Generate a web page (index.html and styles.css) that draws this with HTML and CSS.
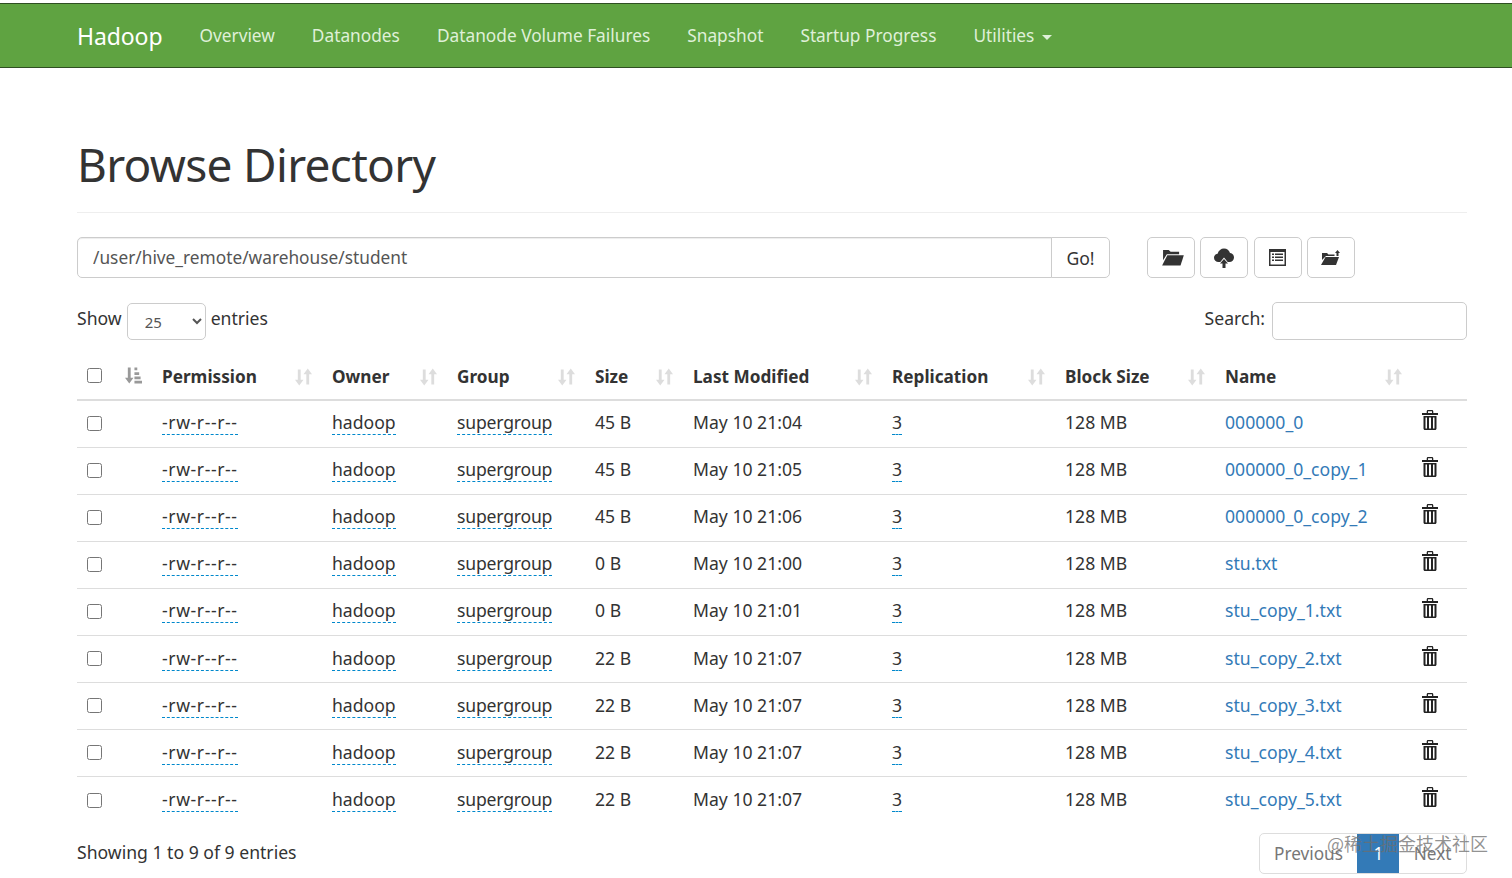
FILE: index.html
```html
<!DOCTYPE html>
<html lang="en">
<head>
    <meta charset="UTF-8">
    <title>Browsing HDFS</title>
    <link rel="stylesheet" href="styles.css">
</head>
<body>
    <svg class="icon-defs" xmlns="http://www.w3.org/2000/svg">
        <symbol id="i-sort" viewBox="0 0 18 18">
            <path d="M3 1h3v11h3l-4.500 6L0 12h3z"/>
            <path d="M12 17h3V6h3L13.500 0 9 6h3z"/>
        </symbol>
        <symbol id="i-sort-asc" viewBox="0 0 18 18">
            <path d="M3 1h3v11h3l-4.500 6L0 12h3z"/>
            <path d="M10 1h3v3h-3zM10 6h5v3h-5zM10 10.500h6.500v3H10zM10 15h8v3h-8z"/>
        </symbol>
        <symbol id="i-folder" viewBox="0 0 24 18">
            <path d="M2 1h6l2 2h9v2.500H6L2 12z"/>
            <path d="M6.500 6.500H24l-3.500 11H1z"/>
        </symbol>
        <symbol id="i-cloud" viewBox="0 0 20 20">
            <path d="M4.500 14C2 14 0 12.300 0 9.800c0-2.200 1.500-3.800 3.600-4C4.500 2.500 7 .5 10 .5c3 0 5.300 1.800 6 4.500 2.300.2 4 2 4 4.400 0 2.600-2 4.600-4.600 4.600h-1.700L10 9.500 6.300 14z"/>
            <path d="M10 11l4 4.500h-2.500V20h-3v-4.500H6z"/>
        </symbol>
        <symbol id="i-list" viewBox="0 0 17 17">
            <path fill-rule="evenodd" d="M0 0h17v17H0zM1.500 3v12.500h14V3z"/>
            <path d="M3 4.500h2V6H3zM6 4.500h8V6H6zM3 7.500h2V9H3zM6 7.500h8V9H6zM3 10.500h2V12H3zM6 10.500h8V12H6z"/>
        </symbol>
        <symbol id="i-folder-up" viewBox="0 0 19 15">
            <path d="M1 3h5l1.500 1.500h6v1.500H5L1 10z"/>
            <path d="M4.500 7H18l-3 8H0z"/>
            <path d="M16.500 0L19 3h-1.500v3h-2V3H14z"/>
        </symbol>
        <symbol id="i-trash" viewBox="0 0 16 20">
            <path d="M6 0h4c.8 0 1.300.6 1.300 1.500V3H16v2H0V3h4.700V1.500C4.700.6 5.200 0 6 0zm0 1.300V3h4V1.300z" fill-rule="evenodd"/>
            <path fill-rule="evenodd" d="M1.500 6h13v12.500c0 .9-.6 1.500-1.500 1.500H3c-.9 0-1.500-.6-1.500-1.500zM3.500 7.500v11h1.500v-11zM7 7.500v11h2v-11zM11 7.500v11h1.500v-11z"/>
        </symbol>
    </svg>

    <nav class="navbar">
        <a class="brand" href="#">Hadoop</a>
        <ul class="nav-links">
            <li><a href="#">Overview</a></li>
            <li><a href="#">Datanodes</a></li>
            <li><a href="#">Datanode Volume Failures</a></li>
            <li><a href="#">Snapshot</a></li>
            <li><a href="#">Startup Progress</a></li>
            <li><a href="#">Utilities <span class="caret"></span></a></li>
        </ul>
    </nav>

    <div class="container">
        <div class="page-header">
            <h1>Browse Directory</h1>
        </div>

        <div class="path-row">
            <div class="input-group">
                <input class="path-input" type="text" value="/user/hive_remote/warehouse/student">
                <button class="go-button" type="button">Go!</button>
            </div>
            <div class="toolbar">
                <button class="tool-button" type="button"><svg class="icon-folder"><use href="#i-folder"/></svg></button>
                <button class="tool-button" type="button"><svg class="icon-cloud"><use href="#i-cloud"/></svg></button>
                <button class="tool-button" type="button"><svg class="icon-list"><use href="#i-list"/></svg></button>
                <button class="tool-button" type="button"><svg class="icon-folder-up"><use href="#i-folder-up"/></svg></button>
            </div>
        </div>

        <div class="table-controls">
            <label class="length-label">Show
                <select class="length-select"><option>25</option></select>
                entries</label>
            <label class="search-label">Search:
                <input class="search-input" type="search">
            </label>
        </div>

        <table class="file-table">
            <colgroup>
                <col class="col-check">
                <col class="col-order">
                <col class="col-permission">
                <col class="col-owner">
                <col class="col-group">
                <col class="col-size">
                <col class="col-modified">
                <col class="col-replication">
                <col class="col-block">
                <col class="col-name">
                <col class="col-delete">
            </colgroup>
            <thead>
                <tr>
                    <th><input class="row-check" type="checkbox"></th>
                    <th><svg class="sort-icon sort-active"><use href="#i-sort-asc"/></svg></th>
                    <th><div class="th-inner">Permission <svg class="sort-icon"><use href="#i-sort"/></svg></div></th>
                    <th><div class="th-inner">Owner <svg class="sort-icon"><use href="#i-sort"/></svg></div></th>
                    <th><div class="th-inner">Group <svg class="sort-icon"><use href="#i-sort"/></svg></div></th>
                    <th><div class="th-inner">Size <svg class="sort-icon"><use href="#i-sort"/></svg></div></th>
                    <th><div class="th-inner">Last Modified <svg class="sort-icon"><use href="#i-sort"/></svg></div></th>
                    <th><div class="th-inner">Replication <svg class="sort-icon"><use href="#i-sort"/></svg></div></th>
                    <th><div class="th-inner">Block Size <svg class="sort-icon"><use href="#i-sort"/></svg></div></th>
                    <th><div class="th-inner">Name <svg class="sort-icon"><use href="#i-sort"/></svg></div></th>
                    <th></th>
                </tr>
            </thead>
            <tbody>
                <tr>
                    <td><input class="row-check" type="checkbox"></td><td></td>
                    <td><span class="editable perm">-rw-r--r--</span></td>
                    <td><span class="editable">hadoop</span></td>
                    <td><span class="editable group">supergroup</span></td>
                    <td>45 B</td>
                    <td>May 10 21:04</td>
                    <td><span class="editable">3</span></td>
                    <td>128 MB</td>
                    <td><a class="file-link" href="#">000000_0</a></td>
                    <td><svg class="icon-trash"><use href="#i-trash"/></svg></td>
                </tr>
                <tr>
                    <td><input class="row-check" type="checkbox"></td><td></td>
                    <td><span class="editable perm">-rw-r--r--</span></td>
                    <td><span class="editable">hadoop</span></td>
                    <td><span class="editable group">supergroup</span></td>
                    <td>45 B</td>
                    <td>May 10 21:05</td>
                    <td><span class="editable">3</span></td>
                    <td>128 MB</td>
                    <td><a class="file-link" href="#">000000_0_copy_1</a></td>
                    <td><svg class="icon-trash"><use href="#i-trash"/></svg></td>
                </tr>
                <tr>
                    <td><input class="row-check" type="checkbox"></td><td></td>
                    <td><span class="editable perm">-rw-r--r--</span></td>
                    <td><span class="editable">hadoop</span></td>
                    <td><span class="editable group">supergroup</span></td>
                    <td>45 B</td>
                    <td>May 10 21:06</td>
                    <td><span class="editable">3</span></td>
                    <td>128 MB</td>
                    <td><a class="file-link" href="#">000000_0_copy_2</a></td>
                    <td><svg class="icon-trash"><use href="#i-trash"/></svg></td>
                </tr>
                <tr>
                    <td><input class="row-check" type="checkbox"></td><td></td>
                    <td><span class="editable perm">-rw-r--r--</span></td>
                    <td><span class="editable">hadoop</span></td>
                    <td><span class="editable group">supergroup</span></td>
                    <td>0 B</td>
                    <td>May 10 21:00</td>
                    <td><span class="editable">3</span></td>
                    <td>128 MB</td>
                    <td><a class="file-link" href="#">stu.txt</a></td>
                    <td><svg class="icon-trash"><use href="#i-trash"/></svg></td>
                </tr>
                <tr>
                    <td><input class="row-check" type="checkbox"></td><td></td>
                    <td><span class="editable perm">-rw-r--r--</span></td>
                    <td><span class="editable">hadoop</span></td>
                    <td><span class="editable group">supergroup</span></td>
                    <td>0 B</td>
                    <td>May 10 21:01</td>
                    <td><span class="editable">3</span></td>
                    <td>128 MB</td>
                    <td><a class="file-link" href="#">stu_copy_1.txt</a></td>
                    <td><svg class="icon-trash"><use href="#i-trash"/></svg></td>
                </tr>
                <tr>
                    <td><input class="row-check" type="checkbox"></td><td></td>
                    <td><span class="editable perm">-rw-r--r--</span></td>
                    <td><span class="editable">hadoop</span></td>
                    <td><span class="editable group">supergroup</span></td>
                    <td>22 B</td>
                    <td>May 10 21:07</td>
                    <td><span class="editable">3</span></td>
                    <td>128 MB</td>
                    <td><a class="file-link" href="#">stu_copy_2.txt</a></td>
                    <td><svg class="icon-trash"><use href="#i-trash"/></svg></td>
                </tr>
                <tr>
                    <td><input class="row-check" type="checkbox"></td><td></td>
                    <td><span class="editable perm">-rw-r--r--</span></td>
                    <td><span class="editable">hadoop</span></td>
                    <td><span class="editable group">supergroup</span></td>
                    <td>22 B</td>
                    <td>May 10 21:07</td>
                    <td><span class="editable">3</span></td>
                    <td>128 MB</td>
                    <td><a class="file-link" href="#">stu_copy_3.txt</a></td>
                    <td><svg class="icon-trash"><use href="#i-trash"/></svg></td>
                </tr>
                <tr>
                    <td><input class="row-check" type="checkbox"></td><td></td>
                    <td><span class="editable perm">-rw-r--r--</span></td>
                    <td><span class="editable">hadoop</span></td>
                    <td><span class="editable group">supergroup</span></td>
                    <td>22 B</td>
                    <td>May 10 21:07</td>
                    <td><span class="editable">3</span></td>
                    <td>128 MB</td>
                    <td><a class="file-link" href="#">stu_copy_4.txt</a></td>
                    <td><svg class="icon-trash"><use href="#i-trash"/></svg></td>
                </tr>
                <tr>
                    <td><input class="row-check" type="checkbox"></td><td></td>
                    <td><span class="editable perm">-rw-r--r--</span></td>
                    <td><span class="editable">hadoop</span></td>
                    <td><span class="editable group">supergroup</span></td>
                    <td>22 B</td>
                    <td>May 10 21:07</td>
                    <td><span class="editable">3</span></td>
                    <td>128 MB</td>
                    <td><a class="file-link" href="#">stu_copy_5.txt</a></td>
                    <td><svg class="icon-trash"><use href="#i-trash"/></svg></td>
                </tr>
            </tbody>
        </table>

        <div class="table-footer">
            <div class="table-info">Showing 1 to 9 of 9 entries</div>
            <ul class="pagination">
                <li><a class="page-link" href="#">Previous</a></li>
                <li><a class="page-link page-current" href="#">1</a></li>
                <li><a class="page-link" href="#">Next</a></li>
            </ul>
        </div>
    </div>

    <div class="watermark">@稀土掘金技术社区</div>
</body>
</html>
```

FILE: styles.css
```css
* {
    box-sizing: border-box;
}

html, body {
    height: 878px;
    overflow: hidden;
}

body {
    margin: 0;
    padding-top: 3px;
    background-color: #ffffff;
    color: #333333;
    font-family: "Noto Sans", "Open Sans", sans-serif;
    font-size: 17.600px;
}

a {
    text-decoration: none;
}

ul {
    list-style: none;
    margin: 0;
    padding: 0;
}

.icon-defs {
    display: none;
}

/* navbar */
.navbar {
    display: flex;
    align-items: center;
    height: 65px;
    padding-left: 77px;
    background-color: #5fa341;
    border-top: 1px solid #2f4f22;
    border-bottom: 1px solid #2f4f22;
}

.brand {
    color: #ffffff;
    font-size: 23px;
    letter-spacing: -0.100px;
    margin-right: 18.500px;
}

.nav-links {
    display: flex;
}

.nav-links a {
    display: block;
    padding: 0 18.500px;
    color: #dff0d8;
    font-size: 17.300px;
}

.caret {
    display: inline-block;
    margin-left: 3px;
    vertical-align: middle;
    border-top: 5px solid #dff0d8;
    border-left: 5px solid transparent;
    border-right: 5px solid transparent;
}

/* main */
.container {
    padding: 0 45px 0 77px;
}

.page-header {
    height: 145px;
    padding-top: 65px;
    border-bottom: 1px solid #eeeeee;
}

.page-header h1 {
    margin: 0;
    font-size: 46px;
    font-weight: 400;
    letter-spacing: -0.700px;
    line-height: 62px;
}

.path-row {
    display: flex;
    margin-top: 24px;
}

.input-group {
    display: flex;
    width: 1033px;
    height: 41px;
}

.path-input {
    flex: 1;
    padding: 0 15px;
    border: 1px solid #cccccc;
    border-radius: 5px 0 0 5px;
    color: #555555;
    font-family: inherit;
    font-size: 17.300px;
    box-shadow: inset 0 1px 1px rgba(0, 0, 0, 0.075);
}

.go-button {
    width: 59px;
    margin-left: -1px;
    background-color: #ffffff;
    border: 1px solid #cccccc;
    border-radius: 0 5px 5px 0;
    color: #333333;
    font-family: inherit;
    font-size: 17.600px;
}

.toolbar {
    display: flex;
    gap: 5.300px;
    margin-left: 37px;
}

.tool-button {
    display: flex;
    align-items: center;
    justify-content: center;
    width: 48px;
    height: 41px;
    padding: 0;
    background-color: #ffffff;
    border: 1px solid #cccccc;
    border-radius: 5px;
}

.toolbar svg {
    fill: #333333;
}

.icon-folder {
    width: 23px;
    height: 17px;
    margin-left: 3px;
}

.icon-cloud {
    width: 20px;
    height: 20px;
}

.icon-list {
    width: 17px;
    height: 17px;
}

.icon-folder-up {
    width: 19px;
    height: 15px;
}

.table-controls {
    display: flex;
    justify-content: space-between;
    height: 38px;
    margin-top: 24px;
}

.length-label {
    display: flex;
    gap: 5px;
    line-height: 32px;
}

.search-label {
    display: flex;
    gap: 7px;
    line-height: 32px;
}

.length-select {
    width: 79px;
    height: 37px;
    margin-top: 1px;
    padding-left: 13px;
    background-color: #ffffff;
    border: 1px solid #cccccc;
    border-radius: 5px;
    color: #555555;
    font-family: inherit;
    font-size: 15px;
}

.search-input {
    width: 195px;
    height: 38px;
    border: 1px solid #cccccc;
    border-radius: 5px;
}

/* table */
.file-table {
    width: 1390px;
    margin-top: 14px;
    border-collapse: collapse;
    table-layout: fixed;
}

.col-check { width: 38px; }
.col-order { width: 39px; }
.col-permission { width: 170px; }
.col-owner { width: 125px; }
.col-group { width: 138px; }
.col-size { width: 98px; }
.col-modified { width: 199px; }
.col-replication { width: 173px; }
.col-block { width: 160px; }
.col-name { width: 197px; }
.col-delete { width: 53px; }

.file-table th {
    height: 46px;
    padding: 0 8px;
    border-bottom: 2px solid #dddddd;
    text-align: left;
    font-size: 17.200px;
    font-weight: 700;
}

.file-table td {
    height: 47.100px;
    padding: 0 8px 3px;
    border-top: 1px solid #dddddd;
    white-space: nowrap;
}

.file-table tbody tr:first-child td {
    border-top: 0;
}

.th-inner {
    display: flex;
    justify-content: space-between;
    align-items: center;
    padding-right: 4px;
}

.sort-icon {
    flex: none;
    width: 17px;
    height: 18px;
    fill: #dddddd;
}

.sort-active {
    display: block;
    margin-left: 2px;
    margin-bottom: 4px;
    fill: #999999;
}

.row-check {
    display: block;
    width: 15px;
    height: 15px;
    margin: 2px 0 0 2px;
}

.file-table th .row-check {
    margin: 0 0 2px 2px;
}

.editable {
    border-bottom: 1px dashed #08c;
}

.perm {
    letter-spacing: 0.600px;
}

.group {
    letter-spacing: -0.200px;
}

.file-link {
    color: #337ab7;
}

.icon-trash {
    display: block;
    width: 16px;
    height: 20px;
    margin-bottom: 4px;
    fill: #222222;
}

/* footer */
.table-footer {
    display: flex;
    justify-content: space-between;
    align-items: center;
    margin-top: 9px;
}

.table-info {
    padding-bottom: 3px;
}

.pagination {
    display: flex;
    height: 41px;
    border: 1px solid #dddddd;
    border-radius: 5px;
    font-size: 17.200px;
}

.page-link {
    display: block;
    padding: 0 14.500px;
    color: #777777;
    line-height: 39px;
}

.page-current {
    padding: 0 16px;
    background-color: #337ab7;
    color: #ffffff;
}

.watermark {
    position: absolute;
    top: 830px;
    left: 1327px;
    color: rgba(110, 110, 110, 0.75);
    font-family: "Noto Sans CJK SC", sans-serif;
    font-size: 18px;
    white-space: nowrap;
}
```
